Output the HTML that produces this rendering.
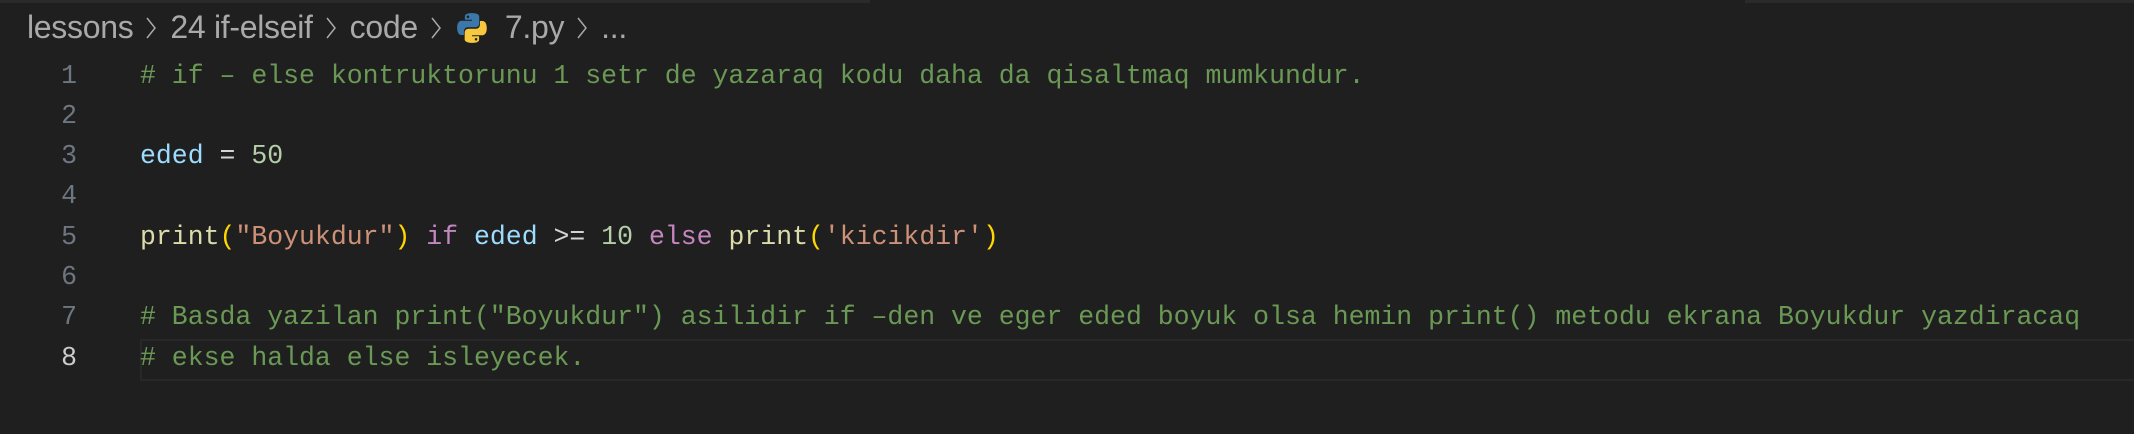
<!DOCTYPE html>
<html><head><meta charset="utf-8"><style>
body{margin:0;width:2134px;height:434px;background:#1f1f1f;overflow:hidden;position:relative;font-family:"Liberation Mono",monospace}
.bc{position:absolute;left:27px;top:7px;font-family:"Liberation Sans",sans-serif;font-size:32px;color:#a9a9a9;white-space:nowrap;line-height:40px;letter-spacing:-0.3px}
.bc svg.ch{margin:0 13px 0 12px;vertical-align:-2px}
.ln{position:absolute;left:0;width:77px;text-align:right;font-size:26.5px;color:#6e7681;line-height:40px}
.cd{position:absolute;left:140px;font-size:26.5px;white-space:pre;line-height:40px;color:#d4d4d4}
.c{color:#6a9955}.v{color:#9cdcfe}.n{color:#b5cea8}.f{color:#dcdcaa}.s{color:#ce9178}.k{color:#c586c0}.p{color:#ffd700}
.cur{position:absolute;left:140px;right:0;top:339px;height:38px;border:2px solid #282828;border-right:none}
</style></head><body>
<div style="position:absolute;left:0;top:0;width:870px;height:3px;background:#2a2a2a"></div>
<div style="position:absolute;left:1745px;top:0;width:389px;height:3px;background:#2a2a2a"></div>
<div class="bc">lessons<svg class="ch" width="12" height="24" viewBox="0 0 12 24"><path d="M2 2l8 10-8 10" fill="none" stroke="#a9a9a9" stroke-width="1.5"/></svg>24 if-elseif<svg class="ch" width="12" height="24" viewBox="0 0 12 24"><path d="M2 2l8 10-8 10" fill="none" stroke="#a9a9a9" stroke-width="1.5"/></svg>code<svg class="ch" width="12" height="24" viewBox="0 0 12 24"><path d="M2 2l8 10-8 10" fill="none" stroke="#a9a9a9" stroke-width="1.5"/></svg><svg width="34" height="34" viewBox="0 0 32 32" style="vertical-align:-7px;margin-right:16px"><path d="M15.9 2c-7 0-6.6 3-6.6 3v3.2h6.7v1H6.6S2 8.7 2 15.8s4 6.8 4 6.8h2.4v-3.3s-.1-4 3.9-4h6.7s3.800.1 3.8-3.7V5.4S23.4 2 15.9 2zm-3.7 2.2a1.2 1.2 0 110 2.4 1.2 1.2 0 010-2.4z" fill="#3b77a8"/><path d="M16.1 30c7 0 6.6-3 6.6-3v-3.2H16v-1h9.4s4.5.5 4.5-6.6-4-6.8-4-6.8h-2.4v3.3s.1 4-3.9 4h-6.7s-3.8-.1-3.8 3.7v6.2S8.6 30 16.1 30zm3.7-2.2a1.2 1.2 0 110-2.4 1.2 1.2 0 010 2.4z" fill="#f7c83e"/></svg>7.py<svg class="ch" width="12" height="24" viewBox="0 0 12 24"><path d="M2 2l8 10-8 10" fill="none" stroke="#a9a9a9" stroke-width="1.5"/></svg>...</div>
<div class="cur"></div>
<div class="ln" style="top:56px">1</div>
<div class="ln" style="top:96px">2</div>
<div class="ln" style="top:136px">3</div>
<div class="ln" style="top:176px">4</div>
<div class="ln" style="top:217px">5</div>
<div class="ln" style="top:257px">6</div>
<div class="ln" style="top:297px">7</div>
<div class="ln" style="top:338px;color:#cccccc">8</div>
<div class="cd c" style="top:56px"># if – else kontruktorunu 1 setr de yazaraq kodu daha da qisaltmaq mumkundur.</div>
<div class="cd" style="top:136px"><span class="v">eded</span> = <span class="n">50</span></div>
<div class="cd" style="top:217px"><span class="f">print</span><span class="p">(</span><span class="s">"Boyukdur"</span><span class="p">)</span> <span class="k">if</span> <span class="v">eded</span> &gt;= <span class="n">10</span> <span class="k">else</span> <span class="f">print</span><span class="p">(</span><span class="s">'kicikdir'</span><span class="p">)</span></div>
<div class="cd c" style="top:297px"># Basda yazilan print("Boyukdur") asilidir if –den ve eger eded boyuk olsa hemin print() metodu ekrana Boyukdur yazdiracaq</div>
<div class="cd c" style="top:338px"># ekse halda else isleyecek.</div>
</body></html>
